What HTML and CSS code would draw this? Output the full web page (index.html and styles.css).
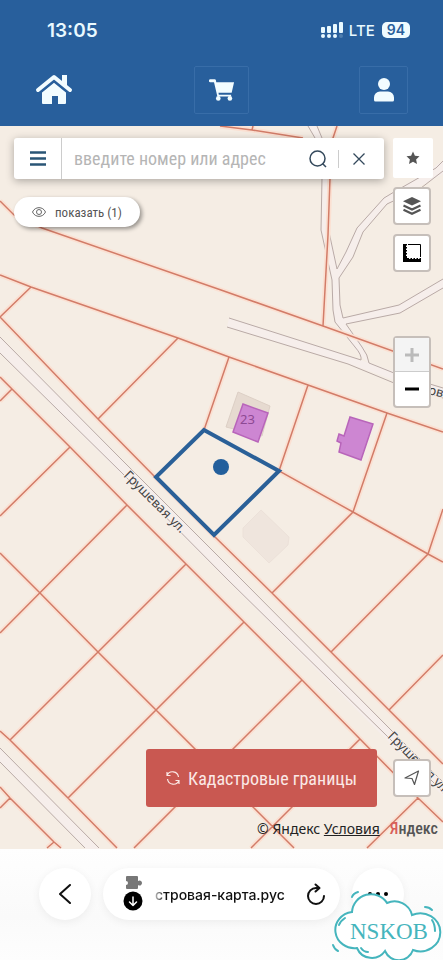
FILE: index.html
```html
<!DOCTYPE html>
<html lang="ru">
<head>
    <meta charset="UTF-8">
    <meta name="viewport" content="width=device-width, initial-scale=1.0">
    <title>Кадастровая карта</title>
    <link rel="stylesheet" href="styles.css">
</head>
<body>
    <header class="header">
        <div class="status">
            <span class="time">13:05</span>
            <div class="status-right">
                <svg class="signal" viewBox="0 0 24 16" width="24" height="16" fill="#e9f9ff">
                    <rect x="1" y="5" width="4" height="6" rx="1"/>
                    <rect x="7" y="4" width="4" height="7" rx="1"/>
                    <rect x="13" y="2" width="4" height="9" rx="1"/>
                    <rect x="19" y="0" width="4" height="11" rx="1"/>
                    <circle cx="3" cy="14" r="2"/>
                    <circle cx="9" cy="14" r="2"/>
                    <circle cx="15" cy="14" r="2"/>
                    <circle cx="21" cy="14" r="2" opacity=".2"/>
                </svg>
                <span class="network">LTE</span>
                <span class="battery">94</span>
            </div>
        </div>
        <nav class="nav">
            <a href="#" class="home" aria-label="Главная">
                <svg viewBox="0 0 38 32" width="38" height="32">
                    <path fill="#f2fcff" d="M7 18 19 8l12 10v11a1 1 0 0 1-1 1h-7v-8h-6v8H8a1 1 0 0 1-1-1z"/>
                    <path fill="none" stroke="#285f9c" stroke-width="6" d="M3 18 19 5l16 13"/>
                    <path fill="#f2fcff" d="M27 1h5v12l-5-4z"/>
                    <path fill="none" stroke="#f2fcff" stroke-width="4" stroke-linecap="round" stroke-linejoin="round" d="M3 16 19 3l16 13"/>
                </svg>
            </a>
            <button class="nav-btn cart" aria-label="Корзина">
                <svg viewBox="0 0 28 24" width="26" height="23">
                    <path fill="#f2fcff" d="M1.500 0H6a1.500 1.500 0 0 1 1.500 1.200L7.800 3H27l-2.600 11.500H10.200l.4 2h13.200v2H9L5.400 3h-4a1.500 1.500 0 0 1 0-3z"/>
                    <circle cx="10" cy="20.500" r="2.500" fill="#f2fcff"/>
                    <circle cx="22.500" cy="20.500" r="2.500" fill="#f2fcff"/>
                </svg>
            </button>
            <button class="nav-btn user" aria-label="Профиль">
                <svg viewBox="0 0 22 24" width="22" height="24" fill="#f2fcff">
                    <circle cx="11" cy="6" r="6"/>
                    <path d="M7 13.500h8a6 6 0 0 1 6 6V22a1.500 1.500 0 0 1-1.500 1.500h-17A1.500 1.500 0 0 1 1 22v-2.500a6 6 0 0 1 6-6z"/>
                </svg>
            </button>
        </nav>
    </header>

    <main class="map">
        <svg class="map-canvas" viewBox="0 126 443 723" preserveAspectRatio="xMidYMid slice">
            <g class="road-fill">
                <path d="M-10 327V343L443 796V782z"/>
                <path d="M-5 743V757L90 853H104z"/>
                <path d="M229 318 361 360 369 363 443 388V398L350 364 227 327z"/>
                <path d="M308 126 315 138 322 178 321 230 332 280 333 310 335 322 361 357 369 363 364 348 346 324 400 313 443 288V279L399 305 343 318 340 305 339 278 353 257 363 232 387 204 443 174V161L394 192 384 198 357 228 338 268 329 232 327 178 322 138 317 126z"/>
            </g>
            <g class="road">
                <path d="M0 337 120 458 241 579 388 727 443 782"/>
                <path d="M0 353 122 473 228 580 386 735 443 792"/>
                <path d="M0 748 99 848M0 762 85 848"/>
                <path d="M229 318 361 360Q362 355 355 347L335 322 333 310 332 280 321 230 322 178 315 138 308 126"/>
                <path d="M227 327 348 364 394 383 443 398"/>
                <path d="M443 388 394 373 369 363Q368 355 362 347L346 324 400 313 443 288"/>
                <path d="M317 126 322 138M329 232 337 269 346 252 357 228 384 198 394 192 436 168 443 161"/>
                <path d="M443 171 421 188 387 204 363 232 353 257 339 278 340 305 343 318 399 305 443 279"/>
            </g>
            <g class="halo">
                <use href="#parcels"/>
            </g>
            <g class="parcel">
                <path id="parcels" d="M0 201 14 215 42 228 221 290 323 326 443 369
                    M0 275 31 287 178 338 229 357 308 385 387 413 443 432
                    M31 287 0 317 98 419 155 477 213 535 272 593 331 652 389 710 443 764
                    M178 338 98 419
                    M0 377 12 389 70 447 127 505 186 564 244 622 302 680 360 739 418 798 443 822
                    M12 389 0 401M70 447 0 516M127 505 0 633M186 564 10 740
                    M0 553 40 593 98 652 156 710 294 848
                    M244 622 68 798M302 680 134 848M360 739 251 848M418 798 367 848
                    M0 731 10 740 68 798 117 848
                    M0 787 10 798 54 842 61 848M10 798 0 808M54 842 47 848
                    M229 357 204 430M308 385 279 471 353 512 428 554 443 562
                    M387 413 353 512 272 593
                    M443 509 428 554 331 652M443 655 389 710
                    M220 126 252 130 303 138M253 126 252 130
                    M337 126 333 138 330 178 328 235 323 326"/>
            </g>
            <path class="house" d="M238 392 270 406 262 436 226 427z"/>
            <path class="house faint" d="M261 510 289 537 288 545 269 563 243 537V528z"/>
            <path class="object" d="M243 404 268 413 258 442 233 432z"/>
            <path class="object" d="M350 417 373 424 361 460 339 452 341 443 337 441 339 434 344 436z"/>
            <text class="house-number" x="240" y="424">23</text>
            <path class="selected" d="M204 430 279 471 214 535 156 477z"/>
            <circle cx="221" cy="467" r="8" fill="#235f9c"/>
            <text class="street" transform="translate(123 476) rotate(45)">Грушевая ул.</text>
            <text class="street" transform="translate(387 737) rotate(45)">Грушевая ул.</text>
            <text class="street" transform="translate(420 392) rotate(14)">ров</text>
        </svg>

        <div class="map-ui">
            <div class="left">
                <form class="search">
                    <button type="button" class="menu" aria-label="Меню">
                        <svg viewBox="0 0 16 15" width="16" height="15"><path stroke="#2a5576" stroke-width="2.500" d="M0 1.500h16M0 7.500h16M0 13.500h16"/></svg>
                    </button>
                    <input type="text" placeholder="введите номер или адрес" aria-label="Поиск">
                    <button type="button" class="find" aria-label="Найти">
                        <svg viewBox="0 0 18 18" width="18" height="18" fill="none" stroke="#34495c" stroke-width="1.500"><circle cx="8.500" cy="8.500" r="7.500"/><path d="m13.500 13.500 3.500 3.500"/></svg>
                    </button>
                    <button type="button" class="clear" aria-label="Очистить">
                        <svg viewBox="0 0 12 12" width="12" height="12" stroke="#34495c" stroke-width="1.300"><path d="m.5.5 11 11m0-11-11 11"/></svg>
                    </button>
                </form>
                <button class="chip">
                    <svg viewBox="0 0 14 10" width="14" height="10" fill="none" stroke="#666"><path d="M.5 5C3-.8 11-.8 13.500 5 11 10.800 3 10.800.5 5z"/><circle cx="7" cy="5" r="2.500"/></svg>
                    показать (1)
                </button>
                <button class="borders">
                    <svg viewBox="0 0 14 14" width="14" height="14" fill="none" stroke="#fbe9e6" stroke-width="1.200">
                        <path d="M1 4.500A6 6 0 0 1 12.500 6M1 1v3.500h3.500M13 9.500A6 6 0 0 1 1.500 8M13 13V9.500H9.500"/>
                    </svg>
                    Кадастровые границы
                </button>
            </div>
            <div class="tools">
                <button class="star" aria-label="Избранное">
                    <svg viewBox="0 0 14 14" width="14" height="14"><path fill="#555" d="m7 .5 1.900 4.300 4.600.5-3.400 3.100.9 4.700-4-2.400-4 2.400.9-4.700L.5 5.300l4.600-.5z"/></svg>
                </button>
                <button class="tool" aria-label="Слои">
                    <svg viewBox="0 0 18 18" width="18" height="18">
                        <path fill="#555" d="m9 0 9 4.200-9 4.300L0 4.200z"/>
                        <path fill="none" stroke="#555" stroke-width="2.200" d="m.5 8.600 8.500 4 8.500-4M.5 12.800l8.500 4 8.500-4"/>
                    </svg>
                </button>
                <button class="tool" aria-label="Линейка">
                    <svg viewBox="0 0 18 18" width="18" height="18">
                        <path fill="none" stroke="#000" d="M5 .5h12.500V13"/>
                        <path d="M0 0h4v1.500H3V3h1v1.500H3V6h1v1.500H3V9h1v1.500H3V12h1v2h2v1h1.500v-1H9v1h1.500v-1H12v1h1.500v-1H15v1h1.500v-1H18v4H0z"/>
                    </svg>
                </button>
                <div class="zoom">
                    <button disabled aria-label="Приблизить"><svg viewBox="0 0 14 14" width="14" height="14"><path stroke="#bbb" stroke-width="3" d="M7 0v14M0 7h14"/></svg></button>
                    <button aria-label="Отдалить"><svg viewBox="0 0 14 14" width="14" height="14"><path stroke="#000" stroke-width="3" d="M0 7h14"/></svg></button>
                </div>
                <button class="tool locate" aria-label="Моё местоположение">
                    <svg viewBox="0 0 16 16" width="16" height="16" fill="none" stroke="#555" stroke-width="1.200" stroke-linejoin="round"><path d="M14.500 1 1 8l7 .5 2.500 6z"/></svg>
                </button>
            </div>
        </div>
        <div class="attribution">
            <span>© Яндекс <a href="#">Условия</a></span>
            <a href="#" class="yandex"><span>Я</span>ндекс</a>
        </div>
    </main>

    <footer class="browser">
        <button class="round back" aria-label="Назад">
            <svg viewBox="0 0 12 20" width="12" height="20" fill="none" stroke="#111" stroke-width="2" stroke-linecap="round" stroke-linejoin="round"><path d="M11 1 1 10l10 9"/></svg>
        </button>
        <div class="address">
            <svg viewBox="0 0 20 36" width="20" height="36">
                <path fill="#777" d="M4 0h10a1 1 0 0 1 1 1v4a2.500 2.500 0 1 1 0 4v3a1 1 0 0 1-1 1H4a1 1 0 0 1-1-1V9a2 2 0 1 0 0-4V1a1 1 0 0 1 1-1z"/>
                <circle cx="10" cy="25" r="9.500"/>
                <path fill="none" stroke="#fff" stroke-width="1.500" stroke-linecap="round" stroke-linejoin="round" d="M10 21v8.500m-3.500-3.500 3.500 3.500 3.500-3.500"/>
            </svg>
            <input type="text" value="стровая-карта.рус" aria-label="Адрес" readonly>
            <button class="reload" aria-label="Обновить">
                <svg viewBox="0 0 18 22" width="18" height="22" fill="none" stroke="#111" stroke-width="2" stroke-linecap="round" stroke-linejoin="round"><path d="M17 13a8 8 0 1 1-8-8h3M8.500 1.500 12.500 5l-4 3.500"/></svg>
            </button>
        </div>
        <button class="round more" aria-label="Ещё">
            <svg viewBox="0 0 20 4" width="20" height="4"><circle cx="2" cy="2" r="2"/><circle cx="10" cy="2" r="2"/><circle cx="18" cy="2" r="2"/></svg>
        </button>
    </footer>

    <svg class="badge" viewBox="0 0 112 72" width="112" height="72">
        <path class="cloud" d="M21 24A19 19 0 0 1 56 15A18 18 0 0 1 81 27A20 19 0 1 1 82 62A15 15 0 0 1 54 63A16 16 0 0 1 26 60A19 18 0 1 1 21 24z"/>
        <path class="dash" d="M21 9c1-3 3-4 6-5M94 19c3 0 5 1 7 3M8 37c1-3 3-5 6-7M101 32c2 3 3 7 3 11M2 57c1 3 3 5 5 6M30 60c2 3 4 4 7 4"/>
        <text x="19" y="51">NSKOB</text>
    </svg>
</body>
</html>
```
FILE: styles.css
```css
* {
    box-sizing: border-box;
}
body {
    font-family: 'Roboto Condensed', 'Liberation Sans Narrow', Roboto, sans-serif;
    display: flex;
    flex-direction: column;
    min-height: 100vh;
    margin: 0;
    background-color: #fdfdfd;
    color: #333;
}
button {
    display: flex;
    align-items: center;
    justify-content: center;
    padding: 0;
    border: none;
    background: none;
    font-family: inherit;
    cursor: pointer;
}
input {
    min-width: 0;
    border: none;
    outline: none;
    background: none;
}
svg {
    flex-shrink: 0;
}

/* header */
.header {
    background-color: #285f9c;
    color: #e9f9ff;
    padding-bottom: 12px;
}
.status {
    display: flex;
    justify-content: space-between;
    align-items: center;
    height: 60px;
    padding: 0 33px 0 47px;
    font-family: Inter, sans-serif;
}
.time {
    font-size: 19px;
    font-weight: 600;
}
.status-right {
    display: flex;
    align-items: center;
    gap: 5px;
}
.network {
    font-size: 15px;
    font-weight: 500;
}
.battery {
    margin-left: 2px;
    padding: 0 5px;
    border-radius: 5px;
    background: #effbff;
    color: #285f9c;
    font-size: 14px;
    font-weight: 600;
    line-height: 16px;
}
.nav {
    display: grid;
    grid-template-columns: 1fr auto 1fr;
    align-items: center;
    padding: 6px 35px 0;
}
.home {
    display: flex;
}
.nav-btn {
    width: 55px;
    height: 48px;
    border: 1px solid #386da8;
    border-radius: 2px;
}
.user {
    width: 49px;
    justify-self: end;
}

/* map */
.map {
    position: relative;
    display: flex;
    flex-direction: column;
    flex: 1;
    background-color: #f5ede4;
    overflow: hidden;
}
.map-canvas {
    position: absolute;
    inset: 0;
    width: 100%;
    height: 100%;
}
.road-fill {
    fill: #f6eeeb;
}
.road {
    fill: none;
    stroke: #b9aaa6;
    stroke-width: 1;
}
.parcel, .halo {
    fill: none;
    stroke: #d27c68;
    stroke-width: 1.5;
}
.halo {
    stroke: #fbe0d2;
    stroke-width: 5;
}
.house {
    fill: #e6dad0;
    stroke: #dccfc5;
}
.faint {
    fill: #efe5dd;
    stroke: #ece1d9;
}
.object {
    fill: #cd86d2;
    stroke: #b865ba;
    stroke-width: 1.5;
}
.house-number {
    font: 13px 'Noto Sans', sans-serif;
    fill: #8d4993;
}
.street {
    font: 13px 'Noto Sans', sans-serif;
    fill: #444;
    stroke: #f6eeeb;
    stroke-width: 2px;
    paint-order: stroke;
}
.selected {
    fill: #f5ede4;
    stroke: #2a6098;
    stroke-width: 4;
}
.map-ui {
    position: relative;
    display: flex;
    flex: 1;
    gap: 9px;
    padding: 12px 10px 0 14px;
}
.left {
    display: flex;
    flex-direction: column;
    align-items: flex-start;
    flex: 1;
    min-width: 0;
}
.search {
    display: flex;
    align-items: center;
    align-self: stretch;
    height: 41px;
    background: #fff;
    border-radius: 3px;
    box-shadow: 0 2px 8px rgba(0, 0, 0, 0.3);
}
.menu {
    width: 48px;
    height: 100%;
    border-right: 1px solid #ccc;
}
.search input {
    flex: 1;
    padding: 0 12px;
    font-family: inherit;
    font-size: 18px;
}
.search input::placeholder {
    color: #b5b5b5;
}
.find {
    width: 30px;
    padding-right: 12px;
    border-right: 1px solid #ccc;
}
.clear {
    width: 40px;
    margin-right: 5px;
}
.chip {
    gap: 9px;
    height: 30px;
    margin-top: 18px;
    padding: 0 18px;
    border-radius: 15px;
    background: #fff;
    color: #555;
    font-size: 13px;
    box-shadow: 2px 2px 4px rgba(0, 0, 0, 0.4);
}
.borders {
    align-self: flex-end;
    gap: 8px;
    height: 58px;
    margin-top: auto;
    margin-right: 7px;
    padding: 0 20px;
    border-radius: 3px;
    background: #c95851;
    color: #fbe9e6;
    font-size: 18px;
}
.tools {
    display: flex;
    flex-direction: column;
    gap: 9px;
    width: 40px;
}
.star {
    height: 40px;
    border-radius: 2px;
    background: #fff;
}
.tool, .zoom {
    width: 38px;
    border: 2px solid #c6bfba;
    border-radius: 4px;
    background: #fff;
}
.tool {
    height: 38px;
}
.zoom {
    margin-top: 55px;
}
.zoom button {
    width: 100%;
    height: 34px;
}
.zoom button:disabled {
    background: #f4f4f4;
    border-bottom: 1px solid #ccc;
}
.locate {
    margin-top: auto;
    margin-bottom: 10px;
}
.attribution {
    position: relative;
    display: flex;
    justify-content: flex-end;
    align-items: center;
    gap: 10px;
    height: 42px;
    padding-right: 5px;
    font-family: 'Noto Sans', sans-serif;
    font-size: 14px;
    color: #222;
}
.attribution a {
    color: #222;
}
.attribution .yandex {
    font-family: 'Roboto Condensed', 'Liberation Sans Narrow', Roboto, sans-serif;
    font-size: 16px;
    font-weight: 500;
    color: #555;
    text-decoration: none;
}
.attribution .yandex span {
    color: #d9605a;
}

/* browser bar */
.browser {
    display: flex;
    align-items: flex-start;
    gap: 12px;
    height: 111px;
    padding: 19px 39px 0;
    background: linear-gradient(#fefefe, #fafafa 60%, #fdfdfd);
}
.round {
    width: 52px;
    height: 52px;
    border-radius: 50%;
    background: #fff;
    box-shadow: 0 2px 10px rgba(0, 0, 0, 0.06);
}
.address {
    display: flex;
    align-items: center;
    flex: 1;
    min-width: 0;
    height: 52px;
    padding: 0 15px 0 20px;
    border-radius: 26px;
    background: #fff;
    box-shadow: 0 2px 10px rgba(0, 0, 0, 0.06);
}
.address input {
    flex: 1;
    padding: 0 0 0 12px;
    font-family: Inter, sans-serif;
    font-size: 14px;
    font-weight: 500;
    color: #111;
    -webkit-mask-image: linear-gradient(to right, transparent 8px, #000 22px);
    mask-image: linear-gradient(to right, transparent 8px, #000 22px);
}
.badge {
    position: absolute;
    right: 0;
    bottom: 0;
}
.cloud {
    fill: #fff;
    stroke: #45b5bd;
    stroke-width: 2;
}
.dash {
    fill: none;
    stroke: #45b5bd;
    stroke-width: 2;
    stroke-linecap: round;
}
.badge text {
    font-family: 'Liberation Serif', serif;
    font-size: 23px;
    fill: #45b5bd;
}
```
